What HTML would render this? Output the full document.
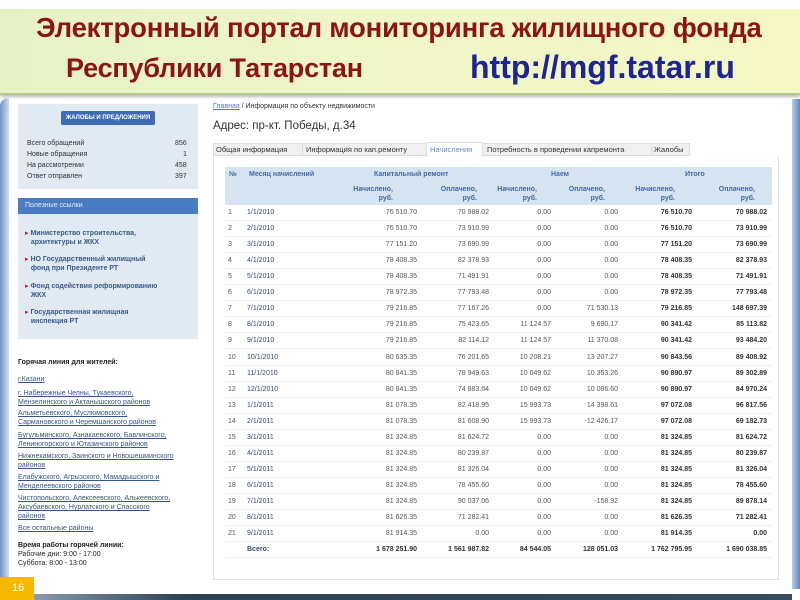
<!DOCTYPE html>
<html><head><meta charset="utf-8"><style>
*{margin:0;padding:0;box-sizing:border-box}
body{width:800px;height:600px;position:relative;overflow:hidden;background:#fff;font-family:"Liberation Sans","DejaVu Sans",sans-serif;font-size:7px;color:#333}
.a{position:absolute;white-space:nowrap}
#hdr{position:absolute;left:0;top:9px;width:800px;height:86px;background:linear-gradient(90deg,#e6f2c6,#f0f6c8 50%,#f4f7c4);border-bottom:2px solid #b5c98c;box-shadow:0 2px 3px #bbb}
.t1{font-size:27.5px;font-weight:bold;color:#8b1414;letter-spacing:-0.2px}
.t2{font-size:32px;font-weight:bold;color:#1e2590}
#lb{position:absolute;left:0;top:98px;width:9px;height:480px;background:linear-gradient(90deg,#6f93c8,#cfdcef);border-radius:8px 0 0 0}
#rb{position:absolute;left:792px;top:99px;width:8px;height:490px;background:linear-gradient(90deg,#b8cce8,#5f86c4)}
.box{position:absolute;background:#e1e9f3}
.lk{color:#36558a;text-decoration:underline;font-size:7px;line-height:9px}
.ul{color:#3a5a8a;font-weight:bold;font-size:7px;line-height:9px}
.row{position:absolute;left:225px;width:547px;height:16px;border-bottom:1px solid #eceff3}
.c{position:absolute;top:4px;text-align:right;color:#555}
.h{color:#3f6aa6;font-weight:bold}
</style></head><body>
<div id="hdr">
<div class="a t1" style="left:36px;top:3px">Электронный портал мониторинга жилищного фонда</div>
<div class="a t1" style="left:66px;top:44px;font-size:27px">Республики Татарстан</div>
<div class="a t2" style="left:470px;top:40px">http://mgf.tatar.ru</div>
</div>
<div id="lb"></div><div id="rb"></div>

<div class="box" style="left:18px;top:104px;width:180px;height:85px"></div>
<div class="a" style="left:61px;top:111px;width:94px;height:14px;background:#3e6cb4;border-radius:2px;color:#fff;font-weight:bold;font-size:6px;text-align:center;line-height:14px">ЖАЛОБЫ И ПРЕДЛОЖЕНИЯ</div>
<div class="a" style="left:27px;top:140px">Всего обращений</div><div class="a" style="left:175px;top:140px">856</div>
<div class="a" style="left:27px;top:151px">Новые обращения</div><div class="a" style="left:183px;top:151px">1</div>
<div class="a" style="left:27px;top:162px">На рассмотрении</div><div class="a" style="left:175px;top:162px">458</div>
<div class="a" style="left:27px;top:173px">Ответ отправлен</div><div class="a" style="left:175px;top:173px">397</div>

<div class="a" style="left:18px;top:198px;width:180px;height:16px;background:#4a7cc1;color:#e6eefa;padding:4px 7px">Полезные ссылки</div>
<div class="box" style="left:18px;top:214px;width:180px;height:125px"></div>
<div class="a ul" style="left:25px;top:229px"><span style="color:#c02020">▸</span> Министерство строительства,<br>&nbsp;&nbsp;&nbsp;архитектуры и ЖКХ</div>
<div class="a ul" style="left:25px;top:255px"><span style="color:#c02020">▸</span> НО Государственный жилищный<br>&nbsp;&nbsp;&nbsp;фонд при Президенте РТ</div>
<div class="a ul" style="left:25px;top:282px"><span style="color:#c02020">▸</span> Фонд содействия реформированию<br>&nbsp;&nbsp;&nbsp;ЖКХ</div>
<div class="a ul" style="left:25px;top:308px"><span style="color:#c02020">▸</span> Государственная жилищная<br>&nbsp;&nbsp;&nbsp;инспекция РТ</div>

<div class="a" style="left:18px;top:359px;font-weight:bold;color:#222">Горячая линия для жителей:</div>
<div class="a lk" style="left:18px;top:375px">г.Казани</div>
<div class="a lk" style="left:18px;top:389px">г. Набережные Челны, Тукаевского,<br>Мензелинского и Актанышского районов</div>
<div class="a lk" style="left:18px;top:409px">Альметьевского, Муслюмовского,<br>Сармановского и Черемшанского районов</div>
<div class="a lk" style="left:18px;top:431px">Бугульминского, Азнакаевского, Бавлинского,<br>Лениногорского и Ютазинского районов</div>
<div class="a lk" style="left:18px;top:452px">Нижнекамского, Заинского и Новошешминского<br>районов</div>
<div class="a lk" style="left:18px;top:473px">Елабужского, Агрызского, Мамадышского и<br>Менделеевского районов</div>
<div class="a lk" style="left:18px;top:494px">Чистопольского, Алексеевского, Алькеевского,<br>Аксубаевского, Нурлатского и Спасского<br>районов</div>
<div class="a lk" style="left:18px;top:524px">Все остальные районы</div>
<div class="a" style="left:18px;top:541px;font-weight:bold;color:#222;line-height:9px">Время работы горячей линии:</div>
<div class="a" style="left:18px;top:550px;color:#222;line-height:9px">Рабочие дни: 9:00 - 17:00<br>Суббота: 8:00 - 13:00</div>
<div class="a" style="left:0;top:577px;width:34px;height:23px;background:#f6b800;color:#fff;font-size:11px;padding:5px 0 0 12px">16</div>
<div class="a" style="left:34px;top:594px;width:758px;height:6px;background:linear-gradient(90deg,#8a9ab0,#2d3f55 20%,#3a4a60)"></div>

<div class="a" style="left:213px;top:103px;color:#333"><span style="color:#4a7cc1;text-decoration:underline">Главная</span> / Информация по объекту недвижимости</div>
<div class="a" style="left:213px;top:120px;font-size:11.5px;color:#333">Адрес: пр-кт. Победы, д.34</div>
<div class="a" style="left:213px;top:143px;width:477px;height:13px;background:#f0f0f0;border:1px solid #ddd"></div>
<div class="a" style="left:216px;top:145px;font-size:7.5px">Общая информация</div>
<div class="a" style="left:302px;top:143px;height:13px;border-left:1px solid #ddd"></div>
<div class="a" style="left:306px;top:145px;font-size:7.5px">Информация по кап.ремонту</div>
<div class="a" style="left:426px;top:142px;width:57px;height:15px;background:#fff;border:1px solid #ddd;border-bottom:none"></div>
<div class="a" style="left:430px;top:145px;font-size:7.5px;color:#5b8fc7">Начисления</div>
<div class="a" style="left:487px;top:145px;font-size:7.5px">Потребность в проведении капремонта</div>
<div class="a" style="left:651px;top:143px;height:13px;border-left:1px solid #ddd"></div>
<div class="a" style="left:654px;top:145px;font-size:7.5px">Жалобы</div>
<div class="a" style="left:213px;top:156px;width:566px;height:424px;border:1px solid #e2e2e2;border-top:none"></div>

<div class="a" style="left:225px;top:167px;width:547px;height:38px;background:#d6e4f2"></div>
<div class="a h" style="left:229px;top:171px">№</div>
<div class="a h" style="left:249px;top:171px">Месяц начислений</div>
<div class="a h" style="left:374px;top:171px">Капитальный ремонт</div>
<div class="a h" style="left:551px;top:171px">Наем</div>
<div class="a h" style="left:685px;top:171px">Итого</div>
<div class="a h" style="left:343px;top:185px;width:50px;text-align:right;line-height:9px">Начислено,<br>руб.</div>
<div class="a h" style="left:427px;top:185px;width:50px;text-align:right;line-height:9px">Оплачено,<br>руб.</div>
<div class="a h" style="left:487px;top:185px;width:50px;text-align:right;line-height:9px">Начислено,<br>руб.</div>
<div class="a h" style="left:555px;top:185px;width:50px;text-align:right;line-height:9px">Оплачено,<br>руб.</div>
<div class="a h" style="left:625px;top:185px;width:50px;text-align:right;line-height:9px">Начислено,<br>руб.</div>
<div class="a h" style="left:705px;top:185px;width:50px;text-align:right;line-height:9px">Оплачено,<br>руб.</div>

<div id="rows"></div>
<script>
(function(){
var d=[["1/1/2010","76 510.70","70 988.02","0.00","0.00","76 510.70","70 988.02"],
["2/1/2010","76 510.70","73 910.99","0.00","0.00","76 510.70","73 910.99"],
["3/1/2010","77 151.20","73 690.99","0.00","0.00","77 151.20","73 690.99"],
["4/1/2010","78 408.35","82 378.93","0.00","0.00","78 408.35","82 378.93"],
["5/1/2010","78 408.35","71 491.91","0.00","0.00","78 408.35","71 491.91"],
["6/1/2010","78 972.35","77 793.48","0.00","0.00","78 972.35","77 793.48"],
["7/1/2010","79 216.85","77 167.26","0.00","71 530.13","79 216.85","148 697.39"],
["8/1/2010","79 216.85","75 423.65","11 124.57","9 690.17","90 341.42","85 113.82"],
["9/1/2010","79 216.85","82 114.12","11 124.57","11 370.08","90 341.42","93 484.20"],
["10/1/2010","80 635.35","76 201.65","10 208.21","13 207.27","90 843.56","89 408.92"],
["11/1/2010","80 841.35","78 949.63","10 049.62","10 353.26","90 890.97","89 302.89"],
["12/1/2010","80 841.35","74 883.64","10 049.62","10 086.60","90 890.97","84 970.24"],
["1/1/2011","81 078.35","82 418.95","15 993.73","14 398.61","97 072.08","96 817.56"],
["2/1/2011","81 078.35","81 608.90","15 993.73","-12 426.17","97 072.08","69 182.73"],
["3/1/2011","81 324.85","81 624.72","0.00","0.00","81 324.85","81 624.72"],
["4/1/2011","81 324.85","80 239.87","0.00","0.00","81 324.85","80 239.87"],
["5/1/2011","81 324.85","81 326.04","0.00","0.00","81 324.85","81 326.04"],
["6/1/2011","81 324.85","78 455.60","0.00","0.00","81 324.85","78 455.60"],
["7/1/2011","81 324.85","90 037.06","0.00","-158.92","81 324.85","89 878.14"],
["8/1/2011","81 626.35","71 282.41","0.00","0.00","81 626.35","71 282.41"],
["9/1/2011","81 914.35","0.00","0.00","0.00","81 914.35","0.00"]];
var R=[417,489,551,618,692,767],h="";
function cells(v,b){var s="";for(var j=0;j<6;j++){s+='<div class="c" style="left:'+(R[j]-225-70)+'px;width:70px;'+((b||j>3)?'font-weight:bold;color:#333':'')+'">'+v[j]+'</div>';}return s;}
for(var i=0;i<21;i++){var ty=(205+i*16.05).toFixed(1);
h+='<div class="row" style="top:'+ty+'px"><div class="c" style="left:3px;text-align:left">'+(i+1)+'</div><div class="c" style="left:22px;text-align:left;color:#3a4a6a">'+d[i][0]+'</div>'+cells(d[i].slice(1),false)+'</div>';}
h+='<div class="row" style="top:542px"><div class="c h" style="left:22px;text-align:left;color:#3a4a6a;font-weight:bold">Всего:</div>'+cells(["1 678 251.90","1 561 987.82","84 544.05","128 051.03","1 762 795.95","1 690 038.85"],true)+'</div>';
document.getElementById("rows").innerHTML=h;
})();
</script>
</body></html>
